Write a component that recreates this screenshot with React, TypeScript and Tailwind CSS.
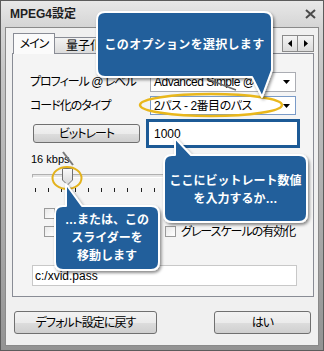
const FONT = "font-['Liberation_Sans','Noto_Sans_CJK_JP',sans-serif]";
const BTN =
  "flex items-center justify-center border border-[#707070] rounded-[3px] bg-[linear-gradient(180deg,#f2f2f2_0%,#ebebeb_50%,#dddddd_51%,#cfcfcf_100%)] text-[12px] text-black tracking-[-1px] [font-feature-settings:'palt']";

function Select({ value, focus }: { value: string; focus?: boolean }) {
  return (
    <div
      className={`flex items-center w-[146px] h-full bg-white border ${
        focus ? "border-[#7a9bc8]" : "border-[#abadb3]"
      }`}
    >
      <span className="flex-1 pl-[3px] whitespace-nowrap overflow-hidden text-[12px] leading-none tracking-[-0.5px]">{value}</span>
      <svg className="w-[7px] h-[4px] mr-[5px] flex-shrink-0" viewBox="0 0 7 4">
        <path d="M0 0h7L3.5 4z" fill="#000" />
      </svg>
    </div>
  );
}

function Checkbox() {
  return <span className="block w-[11px] h-[11px] border border-[#9a9a9a] bg-[linear-gradient(135deg,#e8e8e8,#ffffff)]" />;
}

const TICKS = Array.from({ length: 21 }, (_, i) => i);

export default function App() {
  return (
    <div className={`relative w-[324px] h-[351px] overflow-hidden ${FONT} text-black`}>
      <div className="flex flex-col w-full h-full border border-[#5c5c5c] bg-[linear-gradient(180deg,#e8e8e8_0px,#d5d5d5_26px,#c6c6c6_70px,#939393_100%)]">
        {/* Title bar */}
        <div className="h-[26px] flex items-center justify-between pl-[9px] pr-[7px] flex-shrink-0">
          <span className="font-bold text-[12px] text-[#1e1e1e]">MPEG4設定</span>
          <svg className="w-[11px] h-[10px]" viewBox="0 0 11 10">
            <path d="M1 1l9 8M10 1L1 9" stroke="#4a4a4a" strokeWidth="2" />
          </svg>
        </div>

        {/* Client area */}
        <div className="mx-[4px] mb-[4px] flex-1 border border-[#8a8a8a] bg-[#f0f0f0] flex flex-col">
          {/* Tabs */}
          <div className="mt-[5px] flex items-end h-[20px] pl-[6px] pr-[4px] text-[12px] [font-feature-settings:'palt']">
            <div className="relative z-10 -mb-px ml-px w-[42px] h-[21px] bg-[#fbfbfb] border border-b-0 border-[#898c95] flex items-center justify-center tracking-[-1px]">
              メイン
            </div>
            <div className="w-[50px] h-[17px] -mb-px bg-[linear-gradient(180deg,#f2f2f2,#dcdcdc)] border border-l-0 border-[#898c95] flex items-center pl-[11px]">
              量子化
            </div>
            <div className="ml-auto flex self-start mt-[2px]">
              <div className="w-[16px] h-[17px] border border-[#8a8a8a] bg-[linear-gradient(180deg,#f4f4f4,#dcdcdc)] flex items-center justify-center">
                <svg className="w-[4px] h-[7px]" viewBox="0 0 4 7"><path d="M4 0v7L0 3.5z" fill="#000" /></svg>
              </div>
              <div className="w-[16px] h-[17px] border border-l-0 border-[#8a8a8a] bg-[linear-gradient(180deg,#f4f4f4,#dcdcdc)] flex items-center justify-center">
                <svg className="w-[4px] h-[7px]" viewBox="0 0 4 7"><path d="M0 0v7L4 3.5z" fill="#000" /></svg>
              </div>
            </div>
          </div>

          {/* Tab panel */}
          <div className="ml-[6px] w-[302px] h-[244px] border border-[#898c95] bg-[#f4f4f4] flex flex-col pl-[17px] text-[12px] [font-feature-settings:'palt']">
            <div className="mt-[18px] h-[20px] flex items-center">
              <span className="w-[120px] tracking-[-1px]">プロフィール @ レベル</span>
              <Select value="Advanced Simple @" />
            </div>
            <div className="mt-[4px] h-[19px] flex items-center">
              <span className="w-[120px] tracking-[-1px]">コード化のタイプ</span>
              <Select value="2パス - 2番目のパス" focus />
            </div>
            <div className="mt-[4px] h-[29px] flex items-center">
              <div className={`${BTN} ml-[3px] w-[107px] h-[19px]`}>ビットレート</div>
              <div className="ml-[6px] w-[154px] h-[29px] border-[3px] border-[#1c5a96] bg-white flex items-center pl-[5px]">
                1000
              </div>
            </div>
            <div className="mt-[4px] h-[14px] ml-px text-[11px] leading-[14px]">16 kbps</div>
            <div className="relative mt-[2px] ml-[2px] w-[268px] h-[26px]">
              <div className="absolute left-0 right-0 top-[6px] h-[4px] border border-[#b0b0b0] border-b-white bg-[#e4e4e4]" />
              <svg className="absolute left-[30px] top-0 w-[11px] h-[18px]" viewBox="0 0 11 18">
                <defs>
                  <linearGradient id="th" x1="0" x2="0" y1="0" y2="1">
                    <stop offset="0" stopColor="#fbfbfb" />
                    <stop offset="1" stopColor="#d6d6d6" />
                  </linearGradient>
                </defs>
                <path d="M0.5 0.5H10.5V12L5.5 17L0.5 12Z" fill="url(#th)" stroke="#707070" />
              </svg>
              <div className="absolute left-[3px] top-[20px] w-[265px] flex justify-between">
                {TICKS.map((t) => (
                  <span key={t} className="block w-px h-[4px] bg-[#222]" />
                ))}
              </div>
            </div>
            <div className="mt-[14px] h-[11px] flex items-center pl-[14px]">
              <Checkbox />
            </div>
            <div className="mt-[7px] h-[11px] flex items-center pl-[14px]">
              <Checkbox />
              <span className="ml-[110px]">
                <Checkbox />
              </span>
              <span className="ml-[5px] tracking-[-1px]">グレースケールの有効化</span>
            </div>
            <div className="mt-[28px] ml-[2px] w-[265px] h-[21px] bg-white border border-[#c8c8c8] flex items-center pl-[2px] text-[12px]">
              c:/xvid.pass
            </div>
          </div>

          {/* Bottom buttons */}
          <div className="mt-[14px] flex pl-[8px] pr-[7px]">
            <div className={`${BTN} w-[143px] h-[23px]`}>デフォルト設定に戻す</div>
            <div className={`${BTN} ml-auto w-[97px] h-[23px]`}>はい</div>
          </div>
        </div>
      </div>

      {/* Annotation overlay */}
      <svg className="absolute inset-0 w-[324px] h-[351px] pointer-events-none" viewBox="0 0 324 351">
        <defs>
          <filter id="sh" x="-10%" y="-10%" width="130%" height="140%">
            <feDropShadow dx="1.5" dy="2" stdDeviation="1.5" floodColor="#000" floodOpacity="0.45" />
          </filter>
        </defs>
        <ellipse cx="211" cy="105" rx="71" ry="11" fill="none" stroke="#e9b71c" strokeWidth="2.5" />
        <ellipse cx="67" cy="178" rx="14.5" ry="11" fill="none" stroke="#e3b21c" strokeWidth="2" />
        <path d="M207 79L236 90" stroke="#6a6a6a" strokeWidth="1.5" />
        <path d="M63 152L73 165" stroke="#7a7a7a" strokeWidth="2" />
        <g filter="url(#sh)" fill="#215f9b" stroke="#ffffff" strokeWidth="2" strokeLinejoin="round">
          <path d="M105 12H264Q272 12 272 20V70L262 97L252 77H105Q97 77 97 69V20Q97 12 105 12Z" />
          <path d="M172 155H175V138L191 155H299Q307 155 307 163V214Q307 222 299 222H172Q164 222 164 214V163Q164 155 172 155Z" />
          <path d="M63 206H66V184L82 206H151Q159 206 159 214V262Q159 270 151 270H63Q55 270 55 262V214Q55 206 63 206Z" />
        </g>
      </svg>
      <div className="absolute left-[97px] top-[12px] w-[175px] h-[65px] flex items-center justify-center text-white font-bold text-[12px] tracking-[0.3px]">
        このオプションを選択します
      </div>
      <div className="absolute left-[164px] top-[172px] w-[143px] flex flex-col items-center text-white font-bold text-[12px] leading-[18px]">
        <span>ここにビットレート数値</span>
        <span>を入力するか…</span>
      </div>
      <div className="absolute left-[55px] top-[211px] w-[104px] flex flex-col items-center text-white font-bold text-[12px] leading-[18px]">
        <span>…または、この</span>
        <span>スライダーを</span>
        <span>移動します</span>
      </div>
    </div>
  );
}
